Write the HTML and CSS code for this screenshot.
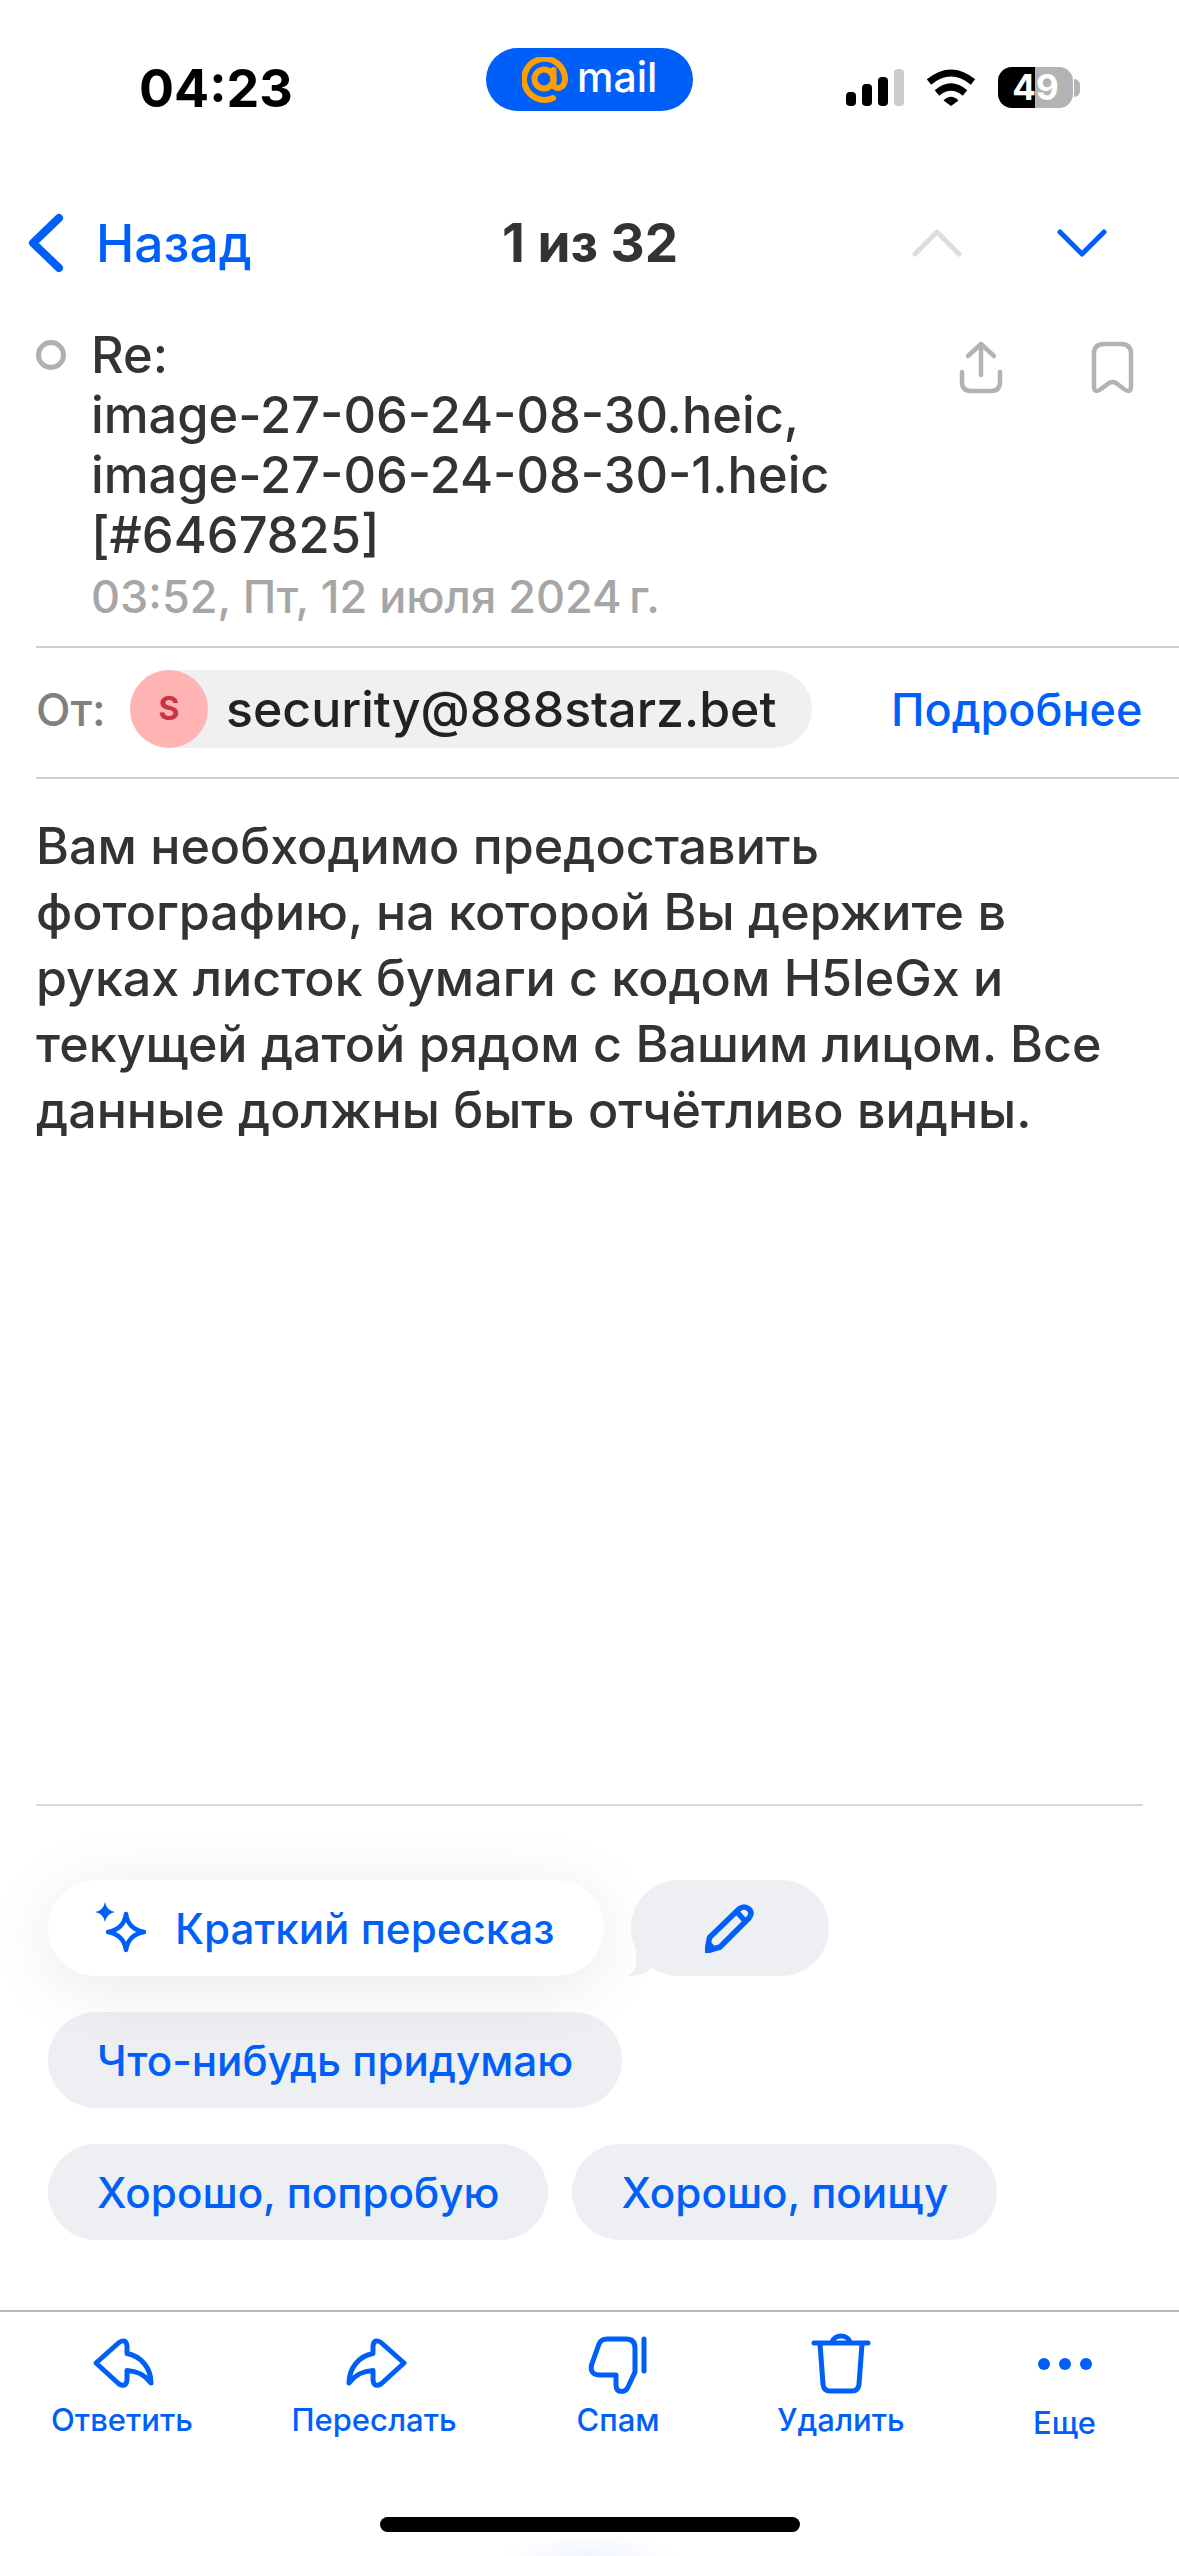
FILE: index.html
```html
<!DOCTYPE html>
<html lang="ru">
<head>
  <meta charset="UTF-8">
  <meta name="viewport" content="width=device-width, initial-scale=1.0">
  <title>Письмо</title>
  <link rel="stylesheet" href="styles.css">
</head>
<body>
  <div class="page">
    <!-- Статус-бар -->
    <header class="status">
      <div class="status-time">04:23</div>
      <div class="app-pill">
        <svg class="app-at" viewBox="0 0 46 46" fill="none" stroke="#ff9e00" stroke-width="6" stroke-linecap="round">
          <circle cx="22" cy="22" r="9.5"/>
          <path d="M31.5 13V27C31.5 33 43 33 43 22A20.500 20.500 0 1 0 31 41"/>
        </svg>
        <span class="app-name">mail</span>
      </div>
      <div></div>
      <div class="status-icons">
        <svg class="signal" viewBox="0 0 58 37">
          <rect x="0" y="23" width="10" height="14" rx="4"/>
          <rect x="16" y="15" width="10" height="22" rx="4"/>
          <rect x="32" y="8" width="10" height="29" rx="4"/>
          <rect x="48" y="0" width="10" height="37" rx="4" fill="#cccccc"/>
        </svg>
        <svg class="wifi" viewBox="0 0 50 37" fill="none" stroke="#000" stroke-width="7">
          <path d="M3 13Q25 -5 47 13"/>
          <path d="M11 24Q25 12 39 24"/>
          <path d="M17.500 31.500Q25 24 32.500 31.500L25 37Z" fill="#000" stroke="none"/>
        </svg>
        <div class="battery">49</div>
        <div class="battery-tip"></div>
      </div>
    </header>

    <!-- Навигация -->
    <nav class="nav">
      <div class="nav-back">
        <svg class="nav-chevron" viewBox="0 0 36 60" fill="none" stroke="#005ff9" stroke-width="8" stroke-linecap="round" stroke-linejoin="round">
          <path d="M31 5L5 30L31 55"/>
        </svg>
        <span>Назад</span>
      </div>
      <div class="nav-count">1 из 32</div>
      <svg class="nav-arrow" viewBox="0 0 50 28" fill="none" stroke="#dddddd" stroke-width="5" stroke-linecap="round" stroke-linejoin="round">
        <path d="M3 25L25 3L47 25"/>
      </svg>
      <svg class="nav-arrow" viewBox="0 0 50 28" fill="none" stroke="#005ff9" stroke-width="5" stroke-linecap="round" stroke-linejoin="round">
        <path d="M3 3L25 25L47 3"/>
      </svg>
    </nav>

    <!-- Тема письма -->
    <section class="subject">
      <div class="unread-dot"></div>
      <div class="subject-text">
        <h1>Re:<br>image-27-06-24-08-30.heic,<br>image-27-06-24-08-30-1.heic<br>[#6467825]</h1>
        <div class="subject-date">03:52, Пт, 12 июля 2024&#8201;г.</div>
      </div>
      <div class="subject-actions">
        <svg class="share-icon" viewBox="0 0 48 56" fill="none" stroke="#b3b3b3" stroke-width="4.500" stroke-linecap="round" stroke-linejoin="round">
          <path d="M24 35V4"/>
          <path d="M11 16L24 4L37 16"/>
          <path d="M5 32V42Q5 51 14 51H34Q43 51 43 42V32"/>
        </svg>
        <svg class="bookmark-icon" viewBox="0 0 48 56" fill="none" stroke="#b3b3b3" stroke-width="4.500" stroke-linejoin="round">
          <path d="M5 14Q5 4 15 4H32Q42 4 42 14V46Q42 54 35 49L27 43Q23.500 41 20 43L12 49Q5 54 5 46Z"/>
        </svg>
      </div>
    </section>

    <!-- Отправитель -->
    <section class="sender">
      <span class="sender-label">От:</span>
      <div class="sender-chip">
        <div class="avatar">S</div>
        <span>security@888starz.bet</span>
      </div>
      <a class="sender-more">Подробнее</a>
    </section>

    <!-- Текст письма -->
    <main class="message">
      Вам необходимо предоставить<br>
      фотографию, на которой Вы держите в<br>
      руках листок бумаги с кодом H5leGx и<br>
      текущей датой рядом с Вашим лицом. Все<br>
      данные должны быть отчётливо видны.
    </main>

    <!-- Быстрые ответы -->
    <section class="replies">
      <div class="reply-row">
        <button class="chip chip-summary">
          <svg class="sparkle" viewBox="0 0 52 52" fill="#005ff9">
            <path d="M10 0Q11.500 8.500 20 10Q11.500 11.500 10 20Q8.500 11.500 0 10Q8.500 8.500 10 0Z"/>
            <path d="M31 12Q33 27 49 30Q33 33 31 48Q29 33 13 30Q29 27 31 12Z" fill="none" stroke="#005ff9" stroke-width="4.500" stroke-linejoin="round"/>
          </svg>
          Краткий пересказ
        </button>
        <button class="chip chip-edit">
          <svg class="bubble-tail" viewBox="0 0 30 30" fill="#eeeff3">
            <path d="M7 0C9 10 10 26 0 30C8 30 17 28 24 22V0Z"/>
          </svg>
          <svg class="pencil" viewBox="0 0 50 50" fill="none" stroke="#005ff9" stroke-width="5.500" stroke-linejoin="round">
            <path d="M2 48L4.500 34.500L34 6Q39 2 44 6Q48 10 44 15L15 44Z"/>
            <path d="M32 9L40 18"/>
            <path d="M0 49.500L3 36L13 46.500Z" fill="#005ff9" stroke="none"/>
          </svg>
        </button>
      </div>
      <div class="reply-row">
        <button class="chip">Что-нибудь придумаю</button>
      </div>
      <div class="reply-row">
        <button class="chip">Хорошо, попробую</button>
        <button class="chip">Хорошо, поищу</button>
      </div>
    </section>

    <!-- Нижняя панель -->
    <footer class="tabs">
      <div class="tab">
        <svg class="tab-icon" viewBox="0 0 66 66" fill="none" stroke="#005ff9" stroke-width="5" stroke-linejoin="round" stroke-linecap="round">
          <path d="M7 32L30 11.500Q37 7 38 15V22.500C52 25 62 37 62 52C55 43 48 40 38 39.500V49Q37 57 30 53Z"/>
        </svg>
        <span class="tab-label">Ответить</span>
      </div>
      <div class="tab">
        <svg class="tab-icon" viewBox="0 0 66 66" fill="none" stroke="#005ff9" stroke-width="5" stroke-linejoin="round" stroke-linecap="round">
          <path transform="matrix(-1 0 0 1 70 0)" d="M7 32L30 11.500Q37 7 38 15V22.500C52 25 62 37 62 52C55 43 48 40 38 39.500V49Q37 57 30 53Z"/>
        </svg>
        <span class="tab-label">Переслать</span>
      </div>
      <div class="tab">
        <svg class="tab-icon" viewBox="0 0 66 66" fill="none" stroke="#005ff9" stroke-width="5" stroke-linejoin="round" stroke-linecap="round">
          <path d="M22 8H41Q50 8 50 17V41L43 56Q41 60.500 37 60.500Q31 60.500 31 54V44H15Q4.500 44 6.500 34L14 13Q16 8 22 8Z"/>
          <path d="M59 8V40"/>
        </svg>
        <span class="tab-label">Спам</span>
      </div>
      <div class="tab">
        <svg class="tab-icon" viewBox="0 0 66 66" fill="none" stroke="#005ff9" stroke-width="5" stroke-linejoin="round" stroke-linecap="round">
          <path d="M6 12H60"/>
          <path d="M24 11A9.500 9 0 0 1 42 11"/>
          <path d="M12 13L15 53Q15.500 60 22 60H44Q50.500 60 51 53L54 13"/>
        </svg>
        <span class="tab-label">Удалить</span>
      </div>
      <div class="tab tab-more">
        <svg class="tab-icon" viewBox="0 0 66 66" fill="#005ff9">
          <circle cx="12" cy="33" r="6"/>
          <circle cx="33" cy="33" r="6"/>
          <circle cx="54" cy="33" r="6"/>
        </svg>
        <span class="tab-label">Еще</span>
      </div>
    </footer>

    <div class="home-area"><div class="home-bar"></div></div>
  </div>
</body>
</html>
```

FILE: styles.css
```css
/* Общие стили */
body {
  margin: 0;
  background: #ffffff;
  font-family: 'Inter', 'Liberation Sans', sans-serif;
  color: #333333;
}

.page {
  height: 2556px;
  display: flex;
  flex-direction: column;
  overflow: hidden;
}

/* Статус-бар */
.status {
  display: grid;
  grid-template-columns: 347px 207px 153px auto;
  padding: 48px 0 0 139px;
}

.status-time {
  font-size: 52px;
  font-weight: 700;
  line-height: 63px;
  margin-top: 9px;
  color: #000000;
}

.app-pill {
  height: 63px;
  border-radius: 32px;
  background: #005ff9;
  display: flex;
  align-items: center;
  padding-left: 36px;
  gap: 9px;
}

.app-at {
  width: 46px;
  height: 46px;
}

.app-name {
  color: #ffffff;
  font-size: 41px;
  font-weight: 500;
  line-height: 46px;
  margin-top: -6px;
}

.status-icons {
  display: flex;
  align-items: center;
  height: 41px;
  margin-top: 19px;
}

.signal {
  width: 58px;
  height: 37px;
  margin-right: 22px;
}

.wifi {
  width: 50px;
  height: 37px;
  margin-right: 22px;
}

.battery {
  width: 75px;
  height: 41px;
  border-radius: 14px;
  background: linear-gradient(90deg, #000000 50%, #b3b3b3 50%);
  color: #ffffff;
  font-size: 35px;
  font-weight: 700;
  line-height: 41px;
  text-align: center;
}

.battery-tip {
  width: 6px;
  height: 18px;
  margin-left: 1px;
  border-radius: 0 9px 9px 0;
  background: #b3b3b3;
}

/* Навигация */
.nav {
  display: flex;
  align-items: center;
  gap: 95px;
  height: 60px;
  margin-top: 93px;
  padding-left: 28px;
}

.nav-back {
  display: flex;
  align-items: center;
  width: 474px;
  margin-right: -95px;
  gap: 32px;
  color: #005ff9;
  font-size: 51.500px;
  font-weight: 500;
}

.nav-chevron {
  width: 36px;
  height: 60px;
}

.nav-count {
  width: 410px;
  margin-right: -95px;
  font-size: 53px;
  font-weight: 700;
}

.nav-arrow {
  width: 50px;
  height: 28px;
}

/* Тема письма */
.subject {
  display: flex;
  margin: 52px 0 0 36px;
  padding-bottom: 19px;
  border-bottom: 2px solid #cfcfcf;
}

.unread-dot {
  width: 30px;
  height: 30px;
  box-sizing: border-box;
  margin-top: 15px;
  margin-right: 25px;
  border: 5px solid #b0b0b0;
  border-radius: 50%;
}

.subject-text {
  flex: 1;
}

.subject h1 {
  margin: 0;
  font-size: 50.500px;
  font-weight: 550;
  line-height: 60px;
}

.subject-date {
  margin-top: 2px;
  font-size: 45px;
  font-weight: 550;
  line-height: 60px;
  color: #a6a6a6;
}

.subject-actions {
  display: flex;
  gap: 84px;
  margin: 15px 42px 0 0;
}

.share-icon,
.bookmark-icon {
  width: 48px;
  height: 56px;
}

/* Отправитель */
.sender {
  display: flex;
  align-items: center;
  margin-left: 36px;
  padding: 22px 0 29px;
  border-bottom: 2px solid #cfcfcf;
}

.sender-label {
  width: 94px;
  font-size: 45px;
  font-weight: 550;
  color: #808080;
}

.sender-chip {
  display: flex;
  align-items: center;
  width: 682px;
  height: 78px;
  gap: 18px;
  border-radius: 39px;
  background: #f0f0f0;
  font-size: 50px;
  font-weight: 500;
  color: #222222;
}

.avatar {
  width: 78px;
  height: 78px;
  border-radius: 50%;
  background: #ffb3b3;
  color: #c8324a;
  font-size: 32px;
  font-weight: 700;
  line-height: 78px;
  text-align: center;
}

.sender-more {
  margin-left: 79px;
  color: #005ff9;
  font-size: 45px;
  font-weight: 500;
}

/* Текст письма */
.message {
  flex: 1;
  margin: 34px 36px 0;
  border-bottom: 2px solid #d9d9d9;
  font-size: 50.200px;
  font-weight: 550;
  line-height: 66px;
}

/* Быстрые ответы */
.replies {
  display: flex;
  flex-direction: column;
  gap: 36px;
  padding: 74px 0 70px 48px;
}

.reply-row {
  display: flex;
  gap: 24px;
}

.chip {
  position: relative;
  height: 96px;
  padding: 0 49px;
  border: none;
  border-radius: 48px;
  background: #eeeff3;
  color: #005ff9;
  font-family: inherit;
  font-size: 42.200px;
  font-weight: 550;
}

.chip-summary {
  display: flex;
  align-items: center;
  gap: 28px;
  z-index: 1;
  padding: 0 50px 0 47px;
  background: #ffffff;
  box-shadow: 0 10px 70px rgba(0, 0, 0, 0.09);
}

.sparkle {
  width: 52px;
  height: 52px;
}

.chip-edit {
  display: flex;
  align-items: center;
  justify-content: center;
  width: 198px;
  margin-left: 3px;
  padding: 0;
  z-index: 2;
}

.bubble-tail {
  position: absolute;
  left: -3px;
  bottom: 0;
  width: 30px;
  height: 30px;
}

.pencil {
  position: relative;
  width: 50px;
  height: 50px;
}

/* Нижняя панель */
.tabs {
  display: grid;
  grid-template-columns: 244px 260px 228px 218px 229px;
  height: 131px;
  padding-top: 19px;
  border-top: 2px solid #b8b8b8;
}

.tab {
  display: flex;
  flex-direction: column;
  align-items: center;
  color: #005ff9;
}

.tab-icon {
  width: 66px;
  height: 66px;
}

.tab-label {
  margin-top: 5px;
  font-size: 31px;
  font-weight: 550;
  line-height: 36px;
}

.tab-more .tab-label {
  margin-top: 8px;
}

.home-area {
  height: 39px;
  display: flex;
  justify-content: center;
  padding-top: 55px;
  background: radial-gradient(ellipse 90px 24px at 50% 100%, #f1f4ff, #ffffff);
}

.home-bar {
  width: 420px;
  height: 15px;
  border-radius: 8px;
  background: #000000;
}
```
